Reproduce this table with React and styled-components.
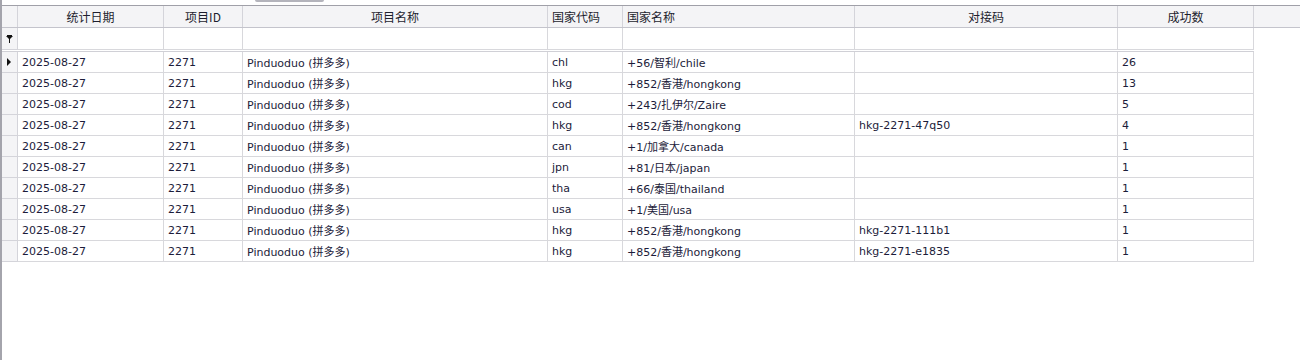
import React from "react";
import styled, { createGlobalStyle } from "styled-components";

const Global = createGlobalStyle`
  html, body { margin: 0; padding: 0; background: #fff; }
  body { font-family: Tahoma, "DejaVu Sans", "Noto Sans CJK SC", sans-serif; }
`;

const COLS = "16px 146px 79px 305px 75px 232px 263px 136px";

const columns = [
  { key: "date", title: "统计日期", align: "center" },
  { key: "pid", title: "项目ID", align: "center" },
  { key: "pname", title: "项目名称", align: "center" },
  { key: "ccode", title: "国家代码", align: "left" },
  { key: "cname", title: "国家名称", align: "left" },
  { key: "dock", title: "对接码", align: "center" },
  { key: "count", title: "成功数", align: "center" },
];

const rows = [
  ["chl", "+56/智利/chile", "", "26"],
  ["hkg", "+852/香港/hongkong", "", "13"],
  ["cod", "+243/扎伊尔/Zaire", "", "5"],
  ["hkg", "+852/香港/hongkong", "hkg-2271-47q50", "4"],
  ["can", "+1/加拿大/canada", "", "1"],
  ["jpn", "+81/日本/japan", "", "1"],
  ["tha", "+66/泰国/thailand", "", "1"],
  ["usa", "+1/美国/usa", "", "1"],
  ["hkg", "+852/香港/hongkong", "hkg-2271-111b1", "1"],
  ["hkg", "+852/香港/hongkong", "hkg-2271-e1835", "1"],
];

const Frame = styled.div`
  height: 360px;
  border-left: 2px solid #a4a4ac;
  box-sizing: border-box;
  display: flex;
  flex-direction: column;
`;

const TopStrip = styled.div`
  height: 5px;
  display: flex;
  align-items: flex-start;
`;

const Tab = styled.div`
  margin-left: 253px;
  width: 69px;
  height: 2px;
  background: #b4b4bc;
  border-radius: 0 0 2px 2px;
`;

const Grid = styled.div`
  border-top: 1px solid #a0a0a8;
  display: flex;
  flex-direction: column;
`;

const HeaderRow = styled.div`
  display: grid;
  grid-template-columns: ${COLS} 1fr;
  height: 22px;
  box-sizing: border-box;
  background: #f4f4f6;
  border-bottom: 1px solid #c4c4cc;
`;

const HeaderCell = styled.div`
  display: flex;
  align-items: center;
  justify-content: ${(p) => (p.$align === "left" ? "flex-start" : "center")};
  padding: 0 4px;
  border-right: 1px solid #d4d4da;
  font-family: "Noto Sans CJK SC", sans-serif;
  font-size: 12px;
  color: #1e1e2e;
  white-space: nowrap;
  overflow: hidden;
  &:last-child { border-right: none; }
`;

const Row = styled.div`
  display: grid;
  grid-template-columns: ${COLS};
  height: ${(p) => p.$h || 21}px;
  box-sizing: border-box;
  width: 1252px;
`;

const Indicator = styled.div`
  background: #f4f4f6;
  border-right: 1px solid #d4d4da;
  border-bottom: 1px solid #d4d4da;
  display: flex;
  align-items: center;
  justify-content: center;
`;

const Cell = styled.div`
  display: flex;
  align-items: center;
  padding: 0 4px;
  border-right: 1px solid #d8d8dc;
  border-bottom: 1px solid #d8d8dc;
  font-family: "DejaVu Sans", "Noto Sans CJK SC", sans-serif;
  font-size: 11px;
  color: #1c1c3a;
  white-space: nowrap;
  overflow: hidden;
`;

const Separator = styled.div`
  width: 1252px;
  height: 2px;
  box-sizing: border-box;
  border-bottom: 1px solid #d0d0d6;
`;

const FilterIcon = () => (
  <svg width="7" height="8" viewBox="0 0 7 8">
    <rect x="1" y="0" width="5" height="1" fill="#111" />
    <polygon points="0,1 7,1 4,4 3,4" fill="#111" />
    <rect x="3" y="4" width="1" height="4" fill="#111" />
  </svg>
);

const Pointer = () => (
  <svg width="5" height="8" viewBox="0 0 5 8">
    <polygon points="0,0 4,4 0,8" fill="#111" />
  </svg>
);

export default function App() {
  return (
    <>
      <Global />
      <Frame>
        <TopStrip>
          <Tab />
        </TopStrip>
        <Grid>
          <HeaderRow>
            <HeaderCell />
            {columns.map((c) => (
              <HeaderCell key={c.key} $align={c.align}>
                {c.title}
              </HeaderCell>
            ))}
            <HeaderCell />
          </HeaderRow>
          <Row $h={22}>
            <Indicator>
              <FilterIcon />
            </Indicator>
            {columns.map((c) => (
              <Cell key={c.key} />
            ))}
          </Row>
          <Separator />
          {rows.map((r, i) => (
            <Row key={i}>
              <Indicator>{i === 0 ? <Pointer /> : null}</Indicator>
              <Cell>2025-08-27</Cell>
              <Cell>2271</Cell>
              <Cell>Pinduoduo (拼多多)</Cell>
              <Cell>{r[0]}</Cell>
              <Cell>{r[1]}</Cell>
              <Cell>{r[2]}</Cell>
              <Cell>{r[3]}</Cell>
            </Row>
          ))}
        </Grid>
      </Frame>
    </>
  );
}
